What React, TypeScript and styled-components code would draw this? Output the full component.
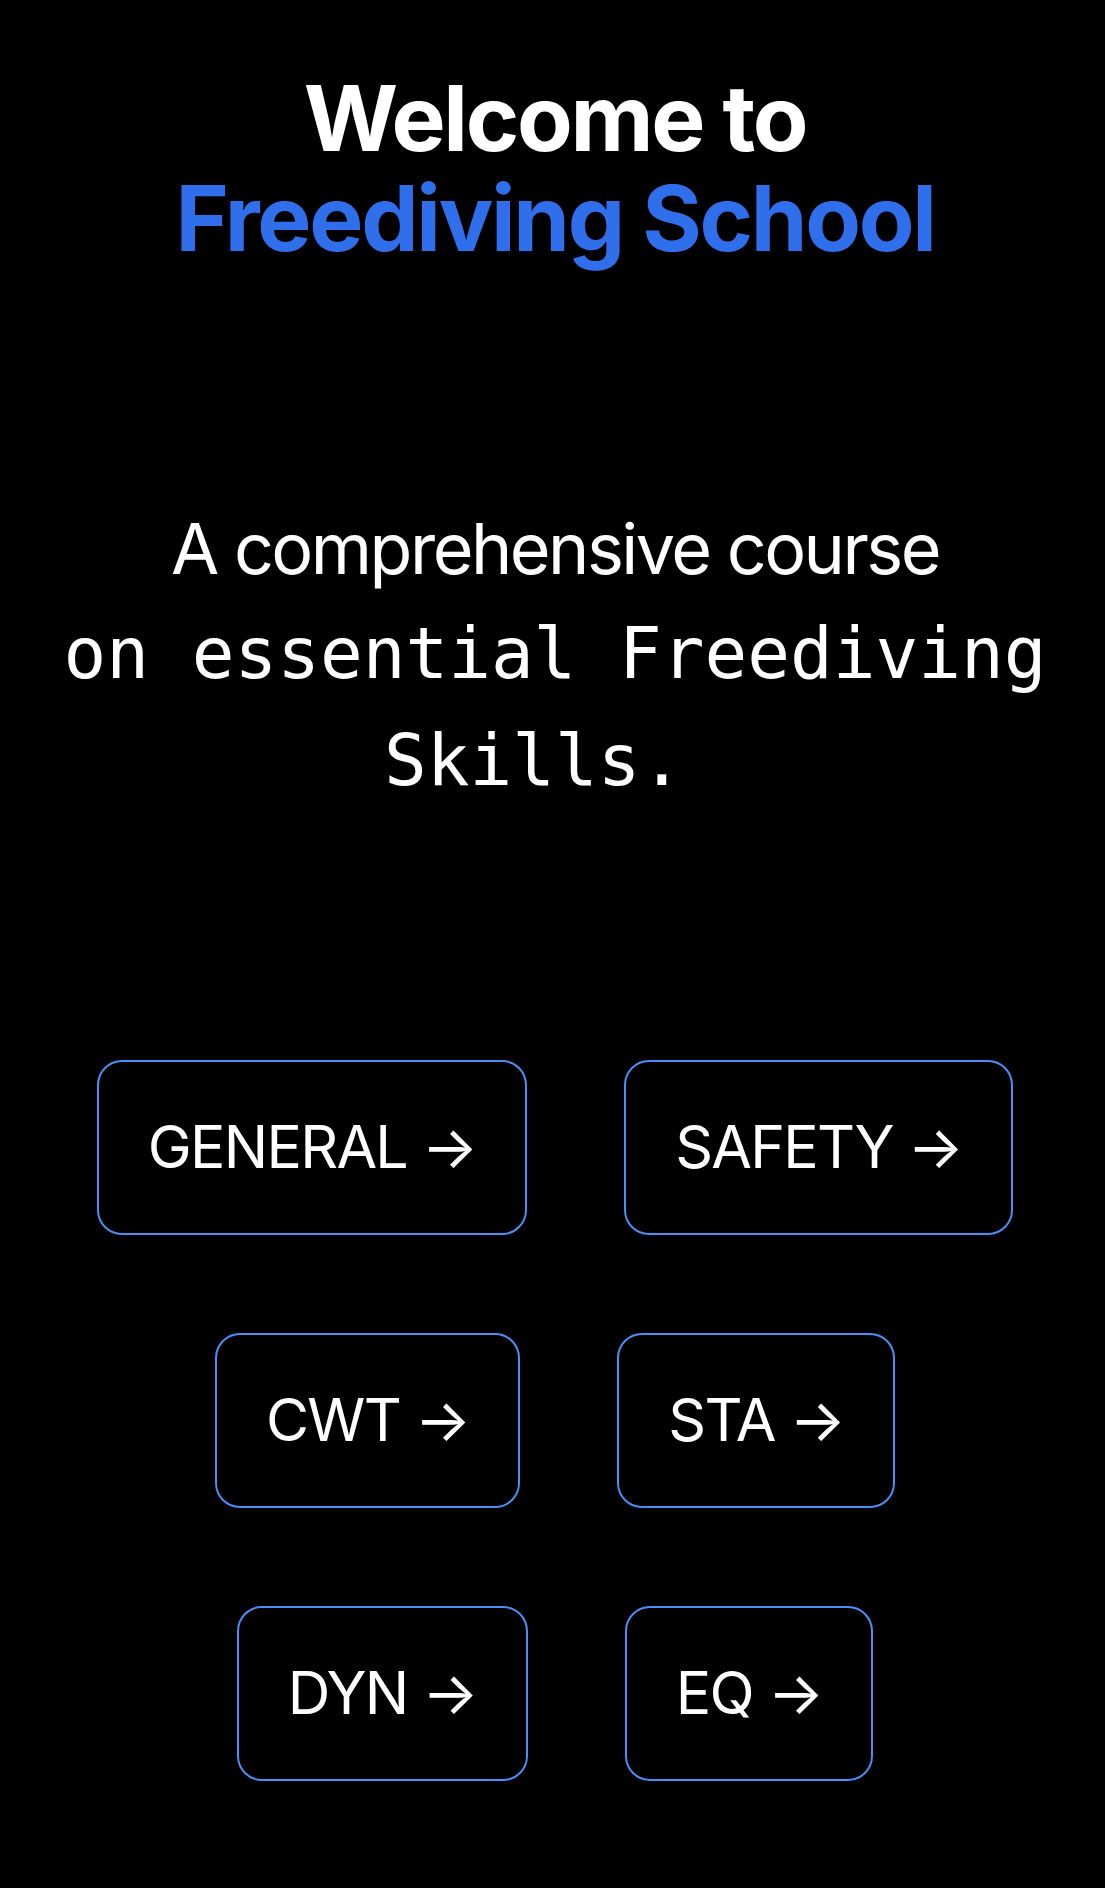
import React from "react";
import styled, { createGlobalStyle } from "styled-components";

const Global = createGlobalStyle`
  html, body {
    margin: 0;
    padding: 0;
    background: #000;
  }
  body {
    font-family: "Inter", "Liberation Sans", sans-serif;
    color: #fff;
    -webkit-font-smoothing: antialiased;
  }
`;

const Page = styled.main`
  min-height: 1888px;
  box-sizing: border-box;
  padding: 68px 46px 80px 51px;
  display: flex;
  flex-direction: column;
  align-items: center;
  background: #000;
`;

const Title = styled.h1`
  margin: 0;
  font-family: "Inter", "Liberation Sans", sans-serif;
  font-weight: 700;
  font-size: 91px;
  line-height: 1.1;
  letter-spacing: -0.025em;
  text-align: center;
  color: #fff;
`;

const Accent = styled.span`
  display: block;
  color: #2f6feb;
`;

const Lead = styled.p`
  margin: 228px 0 0;
  font-size: 70px;
  line-height: 1.5;
  text-align: center;
  font-weight: 400;
`;

const Sans = styled.span`
  display: block;
  font-family: "Inter", "Liberation Sans", sans-serif;
  letter-spacing: -0.036em;
`;

const Mono = styled.span`
  display: block;
  font-family: "DejaVu Sans Mono", monospace;
  font-size: 71px;
`;

const Links = styled.nav`
  margin-top: 246px;
  width: 100%;
  display: flex;
  flex-wrap: wrap;
  justify-content: center;
  gap: 98px 97px;
`;

const CourseButton = styled.a`
  display: inline-flex;
  align-items: center;
  box-sizing: border-box;
  height: 175px;
  padding: 0 49px;
  border: 2px solid #4b8ef5;
  border-radius: 25px;
  background: #000;
  color: #fff;
  text-decoration: none;
  font-family: "Inter", "Liberation Sans", sans-serif;
  font-size: 59px;
  font-weight: 400;
  line-height: 1.5;
  letter-spacing: -0.03em;
  white-space: nowrap;
`;

const courses = ["GENERAL", "SAFETY", "CWT", "STA", "DYN", "EQ"];

export default function App() {
  return (
    <>
      <Global />
      <Page>
        <Title>
          Welcome to
          <Accent>Freediving School</Accent>
        </Title>
        <Lead>
          <Sans>A comprehensive course</Sans>
          <Mono>on essential Freediving Skills.{"\u00a0"}</Mono>
        </Lead>
        <Links>
          {courses.map((c) => (
            <CourseButton key={c} href="#">
              {c} →
            </CourseButton>
          ))}
        </Links>
      </Page>
    </>
  );
}
